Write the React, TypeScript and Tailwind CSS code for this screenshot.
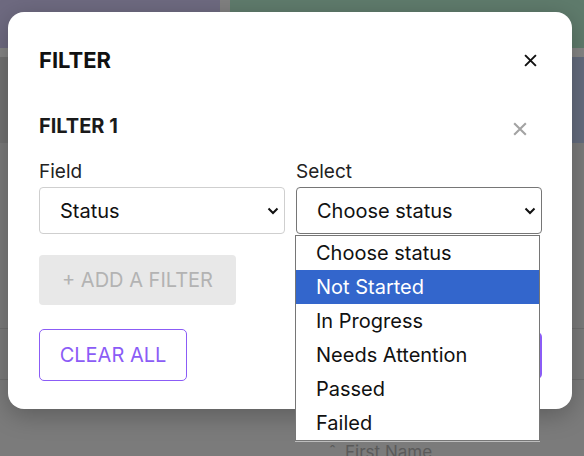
import React from "react";

const XIcon = ({ size, color, stroke }: { size: number; color: string; stroke: number }) => (
  <svg width={size} height={size} viewBox="0 0 12 12" fill="none">
    <path d="M1 1L11 11M11 1L1 11" stroke={color} strokeWidth={stroke} strokeLinecap="butt" />
  </svg>
);

const Chevron = () => (
  <svg width="12" height="8" viewBox="0 0 12 8" fill="none">
    <path d="M1.5 1.5L6 6L10.5 1.5" stroke="#111" strokeWidth="2" />
  </svg>
);

const items = ["Choose status", "Not Started", "In Progress", "Needs Attention", "Passed", "Failed"];

export default function App() {
  return (
    <div className="relative w-[584px] h-[456px] overflow-hidden bg-[#7b7b7b] font-['Inter','Liberation_Sans',sans-serif]">
      {/* background page */}
      <div className="flex h-[48px]">
        <div className="w-[220px] bg-[#6e6a80]" />
        <div className="w-[10px] bg-[#808080]" />
        <div className="flex-1 bg-[#5f7b6c]" />
      </div>
      <div className="h-[9px] bg-[#858585]" />
      <div className="flex h-[86px]">
        <div className="flex-1 bg-[#727272]" />
        <div className="w-[44px] bg-[#646c7e]" />
      </div>
      <div className="h-[185px]" />
      <div className="h-[51px] border-t border-[#6f6f6f]" />
      <div className="border-t border-[#6f6f6f] flex items-start pl-[329px] pt-[62px]">
        <span className="text-[#5a5a5a] text-[17px] leading-[20px] mr-[9px]">ˆ</span>
        <span className="text-[#5a5a5a] text-[17px] leading-[20px]">First Name</span>
      </div>

      {/* modal */}
      <div className="absolute left-[8px] top-[12px] w-[564px] h-[397px] rounded-[16px] bg-white shadow-[0_6px_24px_rgba(0,0,0,0.25)] pl-[31px] pr-[30px] pt-[37px]">
        <div className="flex items-center justify-between h-[22px]">
          <h2 className="text-[22px] leading-none font-bold text-[#111]">FILTER</h2>
          <div className="mr-[5px]">
            <XIcon size={13} color="#111" stroke={1.8} />
          </div>
        </div>
        <div className="flex items-center justify-between mt-[45px] h-[20px]">
          <h3 className="text-[20px] leading-none font-bold text-[#1a1a1a]">FILTER 1</h3>
          <div className="mr-[15px] mt-[6px]">
            <XIcon size={14} color="#a3a3a3" stroke={1.8} />
          </div>
        </div>
        <div className="grid grid-cols-2 gap-[11px] mt-[26px]">
          <div>
            <div className="text-[19px] leading-none text-[#222] h-[19px]">Field</div>
            <div className="mt-[6px] h-[47px] border border-[#cfcfcf] rounded-[4px] flex items-center justify-between pl-[20px] pr-[5px]">
              <span className="text-[20px] text-[#111]">Status</span>
              <Chevron />
            </div>
          </div>
          <div>
            <div className="text-[19px] leading-none text-[#222] h-[19px]">Select</div>
            <div className="mt-[6px] h-[47px] border border-[#767676] rounded-[4px] flex items-center justify-between pl-[20px] pr-[5px]">
              <span className="text-[20px] text-[#111]">Choose status</span>
              <Chevron />
            </div>
          </div>
        </div>
        <div className="mt-[21px] w-[197px] h-[50px] rounded-[4px] bg-[#e8e8e8] flex items-center pl-[23px] text-[20px] text-[#b3b3b3]">
          + ADD A FILTER
        </div>
        <div className="mt-[24px] flex items-center justify-between">
          <div className="w-[148px] h-[52px] rounded-[5px] border border-[#8b5cf6] flex items-center justify-center text-[20px] text-[#8b5cf6]">
            CLEAR ALL
          </div>
          <div className="w-[150px] h-[47px] rounded-[5px] bg-[#8b5cf6]" />
        </div>
      </div>

      {/* open select list */}
      <div className="absolute left-[295px] top-[235px] w-[245px] bg-white border border-[#767676] shadow-[0_1px_0_#bdbdbd]">
        {items.map((it, i) => (
          <div
            key={it}
            className={
              i === 1
                ? "h-[34px] flex items-center pl-[20px] text-[20px] bg-[#3366cc] text-white"
                : "h-[34px] flex items-center pl-[20px] text-[20px] text-[#111]"
            }
          >
            {it}
          </div>
        ))}
      </div>
    </div>
  );
}
